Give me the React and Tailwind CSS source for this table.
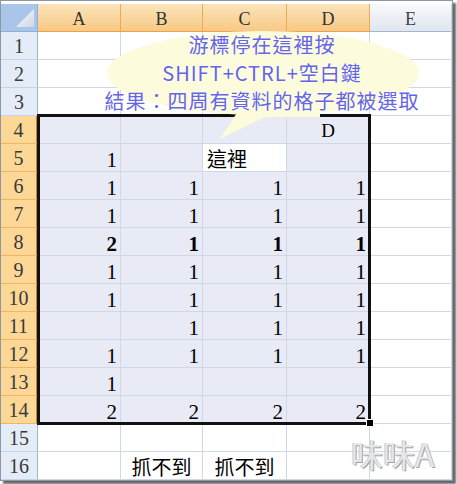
import React from 'react'

const serif = { fontFamily: '"Liberation Serif", "Noto Sans CJK TC", serif' }
const cjk = { fontFamily: '"Noto Sans CJK TC", "Noto Sans CJK SC", sans-serif' }

// cell values per row, columns A..E
const rows = {
  4: ['', '', '', 'D', ''],
  5: ['1', '', '這裡', '', ''],
  6: ['1', '1', '1', '1', ''],
  7: ['1', '1', '1', '1', ''],
  8: ['2', '1', '1', '1', ''],
  9: ['1', '1', '1', '1', ''],
  10: ['1', '1', '1', '1', ''],
  11: ['', '1', '1', '1', ''],
  12: ['1', '1', '1', '1', ''],
  13: ['1', '', '', '', ''],
  14: ['2', '2', '2', '2', ''],
  16: ['', '抓不到', '抓不到', '', ''],
}

const Corner = () => (
  <div className="relative bg-[#a9c5ea] border-r border-b border-[#8eaedb]">
    <svg className="absolute left-0 top-0" width="37" height="28">
      <defs>
        <linearGradient id="tri" x1="0" y1="0" x2="1" y2="1">
          <stop offset="0" stopColor="#ffffff" />
          <stop offset="1" stopColor="#cdd6e3" />
        </linearGradient>
      </defs>
      <polygon points="15,23 33,23 33,5" fill="url(#tri)" />
    </svg>
  </div>
)

const ColHead = ({ label, on }) => (
  <div
    className={
      on
        ? 'flex items-end justify-center pb-[3px] text-[18px] leading-none text-[#333] bg-linear-to-b from-[#fbe4bb] to-[#f8c983] border-r border-b border-r-[#f0a859] border-b-[#f0a04a]'
        : 'flex items-end justify-center pb-[3px] text-[18px] leading-none text-[#3c4650] bg-linear-to-b from-[#f7f9fc] to-[#e1e6ee] border-r border-b border-r-[#c9d3e0] border-b-[#9eb6ce]'
    }
    style={serif}
  >
    {label}
  </div>
)

const RowHead = ({ n, on }) => (
  <div
    className={
      on
        ? 'flex items-center justify-center text-[20px] leading-none text-[#3a3a3a] bg-[#fdd796] border-b border-b-[#f2b466] border-r-2 border-r-[#c9802e]'
        : 'flex items-center justify-center text-[20px] leading-none text-[#3a3a3a] bg-[#e4ecf7] border-b border-b-[#c5d3e6] border-r border-r-[#9eb6ce]'
    }
    style={serif}
  >
    {n}
  </div>
)

const Cell = ({ r, c, v }) => {
  const sel = r >= 4 && r <= 14 && c <= 3
  const active = r === 5 && c === 2
  const bg = active ? 'bg-white' : sel ? 'bg-[#e8eaf5]' : 'bg-white'
  const isNum = /^\d+$/.test(v)
  if (isNum) {
    return (
      <div
        className={`flex items-end justify-end pr-[3px] text-[21px] leading-[22px] text-black border-r border-b border-[#d0d7e5] ${bg} ${r === 8 ? 'font-bold' : ''}`}
        style={serif}
      >
        {v}
      </div>
    )
  }
  if (v === 'D') {
    return (
      <div
        className={`flex items-end justify-center pb-[3px] text-[19px] leading-none text-black border-r border-b border-[#d0d7e5] ${bg}`}
        style={serif}
      >
        {v}
      </div>
    )
  }
  if (v) {
    return (
      <div
        className={`flex items-end whitespace-nowrap text-[20px] leading-[24px] text-black border-r border-b border-[#d0d7e5] ${bg} ${v === '這裡' ? 'justify-start pl-[4px]' : 'justify-center'}`}
        style={cjk}
      >
        {v}
      </div>
    )
  }
  return <div className={`border-r border-b border-[#d0d7e5] ${bg}`} />
}

export default function App() {
  const cols = ['A', 'B', 'C', 'D', 'E']
  const nums = Array.from({ length: 16 }, (_, i) => i + 1)
  return (
    <div className="relative w-[457px] h-[484px] bg-white overflow-hidden">
      <div className="w-[453px] h-[481px] border border-[#8d97a3] bg-white pt-[3px] shadow-[3px_3px_2px_rgba(0,0,0,0.6)]">
        <div className="grid grid-cols-[37px_83px_82px_84px_83px_82px] auto-rows-[28px]">
          <Corner />
          {cols.map((l, i) => (
            <ColHead key={l} label={l} on={i < 4} />
          ))}
          {nums.map((n) => (
            <React.Fragment key={n}>
              <RowHead n={n} on={n >= 4 && n <= 14} />
              {cols.map((l, c) => (
                <Cell key={l} r={n} c={c} v={(rows[n] || [])[c] || ''} />
              ))}
            </React.Fragment>
          ))}
        </div>
      </div>

      {/* selection outline + fill handle */}
      <div className="absolute left-[37px] top-[114px] w-[334px] h-[311px] border-[3px] border-[#111]" />
      <div className="absolute left-[367px] top-[420px] w-[6px] h-[6px] bg-black outline outline-white" />

      {/* callout bubble */}
      <svg className="absolute left-0 top-0 pointer-events-none" width="457" height="484">
        <ellipse cx="263" cy="73" rx="156" ry="42" fill="#fcfcdc" />
        <polygon points="240,108 220,139 265,117 320,117 320,108" fill="#fcfcdc" />
      </svg>
      <div
        className="absolute left-[92px] top-[31px] w-[340px] flex flex-col items-center text-[20px] leading-[28px] tracking-[1px] text-[#6565e6] whitespace-nowrap [text-shadow:0_0_2px_#ffffff]"
        style={cjk}
      >
        <div>游標停在這裡按</div>
        <div>SHIFT+CTRL+空白鍵</div>
        <div>結果：四周有資料的格子都被選取</div>
      </div>

      {/* watermark */}
      <div
        className="absolute left-[351px] top-[433px] text-[32px] leading-[40px] text-[#e6e6e6] whitespace-nowrap [text-shadow:1px_1px_0_#a0a0a0,-1px_0_0_#c8cce0]"
        style={cjk}
      >
        味味A
      </div>
    </div>
  )
}
